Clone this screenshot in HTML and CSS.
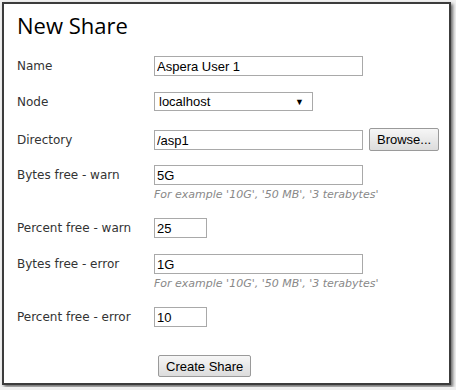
FILE: index.html
```html
<!DOCTYPE html>
<html lang="en">
<head>
  <meta charset="UTF-8">
  <title>New Share</title>
  <link rel="stylesheet" href="styles.css">
</head>
<body>
  <div class="window">
    <h1>New Share</h1>

    <form class="share-form">
      <div class="row">
        <label>Name</label>
        <input class="field wide" type="text" value="Aspera User 1">
      </div>

      <div class="row node-row">
        <label>Node</label>
        <div class="select">
          <span>localhost</span>
          <span class="arrow">&#9660;</span>
        </div>
      </div>

      <div class="row dir-row">
        <label>Directory</label>
        <input class="field wide" type="text" value="/asp1">
        <button type="button" class="btn browse">Browse...</button>
      </div>

      <div class="row">
        <label>Bytes free - warn</label>
        <div class="stack">
          <input class="field wide" type="text" value="5G">
          <span class="hint">For example '10G', '50 MB', '3 terabytes'</span>
        </div>
      </div>

      <div class="row">
        <label>Percent free - warn</label>
        <input class="field short" type="text" value="25">
      </div>

      <div class="row">
        <label>Bytes free - error</label>
        <div class="stack">
          <input class="field wide" type="text" value="1G">
          <span class="hint">For example '10G', '50 MB', '3 terabytes'</span>
        </div>
      </div>

      <div class="row">
        <label>Percent free - error</label>
        <input class="field short" type="text" value="10">
      </div>

      <div class="submit">
        <button type="button" class="btn">Create Share</button>
      </div>
    </form>
  </div>
</body>
</html>
```

FILE: styles.css
```css
* {
  margin: 0;
  padding: 0;
  box-sizing: border-box;
}

body {
  background: #f0f0f0;
  font-family: "DejaVu Sans", Verdana, sans-serif;
  color: #222;
  padding: 2px;
}

.window {
  width: 449px;
  height: 383px;
  background: #fff;
  border: 2px solid #3c3c3c;
  box-shadow: 2px 2px 3px rgba(0, 0, 0, 0.55);
  padding: 8px 13px 0;
}

h1 {
  font-family: "Open Sans", "Segoe UI", sans-serif;
  font-weight: 400;
  font-size: 22px;
  color: #000;
  line-height: 26px;
  margin-bottom: 18px;
}

.row {
  display: flex;
  align-items: flex-start;
  margin-bottom: 16px;
}

.node-row {
  margin-bottom: 18px;
}

.dir-row {
  margin-bottom: 14px;
}

.row label {
  width: 137px;
  flex-shrink: 0;
  font-size: 12px;
  line-height: 20px;
  color: #333;
}

.field {
  flex-shrink: 0;
  height: 20px;
  border: 1px solid #a9a9a9;
  font-family: "Liberation Sans", Arial, sans-serif;
  font-size: 13px;
  padding: 0 2px;
  color: #000;
  background: #fff;
}

.wide {
  width: 209px;
}

.short {
  width: 53px;
}

.stack {
  display: flex;
  flex-direction: column;
}

.hint {
  font-size: 11px;
  font-style: italic;
  color: #888;
  margin-top: 3px;
  line-height: 14px;
}

.select {
  width: 159px;
  height: 19px;
  border: 1px solid #a9a9a9;
  display: flex;
  align-items: center;
  justify-content: space-between;
  padding: 0 8px 0 4px;
  font-family: "Liberation Sans", Arial, sans-serif;
  font-size: 13px;
  color: #000;
}

.arrow {
  font-size: 9px;
}

.btn {
  height: 22px;
  padding: 0 7px;
  border: 1px solid #9a9a9a;
  border-radius: 2px;
  background: linear-gradient(#f6f6f6, #dcdcdc);
  font-family: "Liberation Sans", Arial, sans-serif;
  font-size: 13px;
  color: #000;
}

.browse {
  height: 23px;
  margin-left: 6px;
  margin-top: -2px;
}

.submit {
  padding-left: 141px;
  padding-top: 12px;
}
```
